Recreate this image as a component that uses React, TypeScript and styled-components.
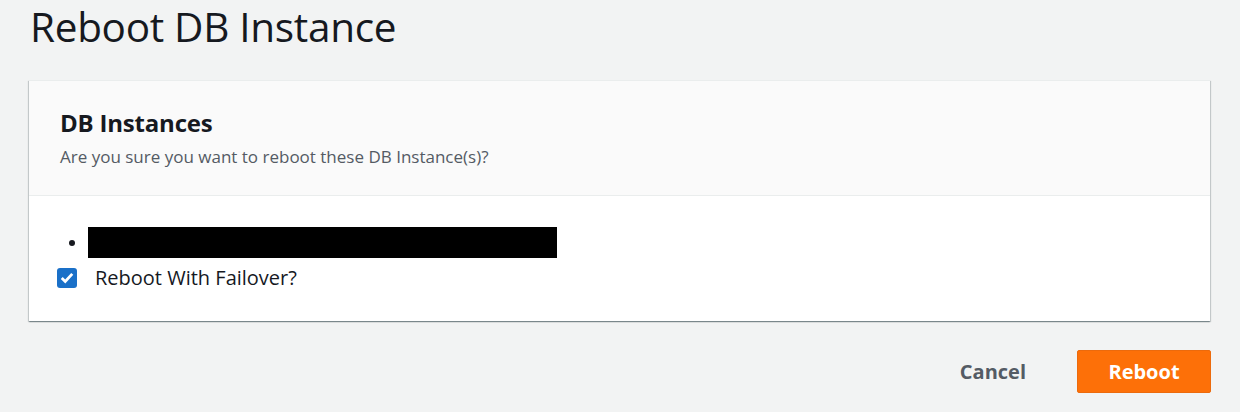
import styled, {createGlobalStyle} from 'styled-components'

const GlobalStyle = createGlobalStyle`
  body {
    margin: 0;
    background: #f2f3f3;
    font-family: "Open Sans", "Noto Sans", sans-serif;
    color: #16191f;
  }
`

const Page = styled.div`
  width: 1240px;
  height: 412px;
  padding: 0 29px;
  box-sizing: border-box;
  overflow: hidden;
`

const Title = styled.h1`
  margin: 0;
  padding: 2px 0 0 1px;
  height: 80px;
  box-sizing: border-box;
  font-size: 40.5px;
  font-weight: 400;
  line-height: 50px;
  letter-spacing: -0.3px;
`

const Panel = styled.section`
  background: #fff;
  border-top: 1px solid #eaeded;
  box-shadow: 0 1px 1px 0 rgba(0, 28, 36, 0.3), 1px 1px 1px 0 rgba(0, 28, 36, 0.15),
    -1px 1px 1px 0 rgba(0, 28, 36, 0.15);
  width: 1181px;
`

const PanelHeader = styled.header`
  background: #fafafa;
  border-bottom: 1px solid #eaeded;
  padding: 25px 31px 0;
  height: 115px;
  box-sizing: border-box;
`

const PanelTitle = styled.h2`
  margin: 0;
  font-size: 24px;
  font-weight: 700;
  line-height: 34px;
  letter-spacing: -0.2px;
`

const PanelSubtitle = styled.p`
  margin: 4px 0 0;
  font-size: 17px;
  color: #545b64;
  line-height: 26px;
`

const PanelBody = styled.div`
  padding: 31px 28px 0;
  height: 125px;
  box-sizing: border-box;
`

const InstanceList = styled.ul`
  margin: 0;
  padding: 0 0 0 12px;
  list-style: none;
`

const InstanceItem = styled.li`
  display: flex;
  align-items: center;
  gap: 13px;
  height: 31px;

  &::before {
    content: '';
    width: 6px;
    height: 6px;
    border-radius: 50%;
    background: #16191f;
  }
`

const Redacted = styled.span`
  width: 469px;
  height: 31px;
  background: #000;
`

const CheckRow = styled.label`
  display: flex;
  align-items: center;
  gap: 18px;
  margin-top: 6px;
  font-size: 20px;
  line-height: 27px;
  color: #16191f;
`

const Box = styled.span`
  width: 20px;
  height: 20px;
  border-radius: 3px;
  background: #1a70c8;
  display: flex;
  align-items: center;
  justify-content: center;
`

const Footer = styled.footer`
  display: flex;
  justify-content: flex-end;
  align-items: center;
  gap: 20px;
  margin-top: 29px;
  width: 1182px;
`

const Button = styled.button<{$primary?: boolean}>`
  font-family: inherit;
  font-size: 20px;
  font-weight: 700;
  height: 43px;
  border-radius: 2px;
  cursor: pointer;
  padding: 0 ${(p) => (p.$primary ? '0' : '30px')};
  border: 1px solid ${(p) => (p.$primary ? '#ec6a0c' : 'transparent')};
  background: ${(p) => (p.$primary ? '#fd7008' : 'transparent')};
  color: ${(p) => (p.$primary ? '#fff' : '#545b64')};
  width: ${(p) => (p.$primary ? '134px' : 'auto')};
`

export default function App() {
  return (
    <Page>
      <GlobalStyle />
      <Title>Reboot DB Instance</Title>
      <Panel>
        <PanelHeader>
          <PanelTitle>DB Instances</PanelTitle>
          <PanelSubtitle>Are you sure you want to reboot these DB Instance(s)?</PanelSubtitle>
        </PanelHeader>
        <PanelBody>
          <InstanceList>
            <InstanceItem>
              <Redacted />
            </InstanceItem>
          </InstanceList>
          <CheckRow>
            <Box>
              <svg width="14" height="14" viewBox="0 0 12 12">
                <path d="M1.5 6 L4.5 9 L10.5 2.5" fill="none" stroke="#fff" strokeWidth="2.4" />
              </svg>
            </Box>
            Reboot With Failover?
          </CheckRow>
        </PanelBody>
      </Panel>
      <Footer>
        <Button>Cancel</Button>
        <Button $primary>Reboot</Button>
      </Footer>
    </Page>
  )
}
